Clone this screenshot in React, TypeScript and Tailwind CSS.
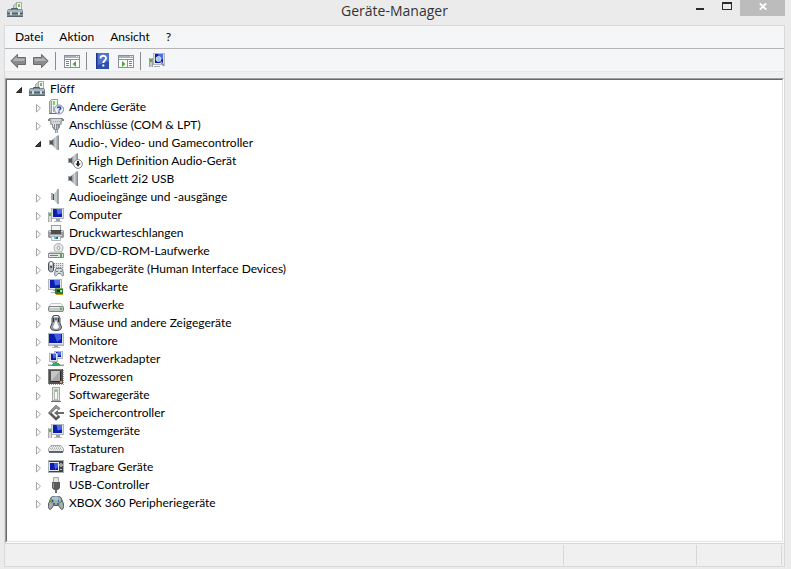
import React from 'react';

const Svg: React.FC<{ children: React.ReactNode }> = ({ children }) => (
  <svg width="16" height="16" viewBox="0 0 16 16" className="block shrink-0" aria-hidden="true">
    {children}
  </svg>
);

const DeviceManager = () => (
  <Svg>
    <path d="M6.5 7.5V3.5L8.5 1.5H9.5V7.5Z" fill="#c9cdd0" stroke="#a3a8ab" />
    <rect x="9.5" y=".5" width="5" height="8" fill="#f2f4f1" stroke="#a9aca8" />
    <rect x="11" y="2" width="2" height="3" fill="#6cc24a" />
    <path d="M1 7H15L16 9V15H0V9Z" fill="#7b8b95" />
    <path d="M1 8H15V10H1Z" fill="#a9b6be" />
    <path d="M4.5 8V6.5H10.5V8" fill="none" stroke="#4e5b64" />
    <path d="M0 11H16V12H0Z" fill="#53626c" />
    <path d="M3 10H5V13H3ZM11 10H13V13H11Z" fill="#d4dbdf" />
    <path d="M0 14H16V15H0Z" fill="#56646d" />
  </Svg>
);

const Unknown = () => (
  <Svg>
    <path d="M1.5 14V2.5L3.5 .5H9.5V14Z" fill="#c6cac7" stroke="#9b9e9c" />
    <rect x="4" y="1" width="5" height="13" fill="#f0f2ef" />
    <path d="M3.5 2V14" stroke="#9b9e9c" />
    <rect x="5" y="2" width="2" height="4" fill="#7ccf5c" />
    <path d="M5.5 7V13" stroke="#aeb2af" />
    <path d="M1 14.5H9" stroke="#6e716f" />
    <circle cx="11" cy="10.5" r="4.5" fill="#eef3fb" stroke="#8089a0" />
    <path d="M9.4 9.3C9.4 7.4 12.7 7.5 12.7 9.2C12.7 10.4 11 10.3 11 11.6" fill="none" stroke="#2246a8" strokeWidth="1.5" />
    <rect x="10.2" y="12.4" width="1.5" height="1.5" fill="#2246a8" />
  </Svg>
);

const Port = () => (
  <Svg>
    <path d="M1 1H15L13.5 8H2.5Z" fill="#a3a8ab" />
    <path d="M3 2H13L12 7H4Z" fill="#d3d7d9" />
    <path d="M1 1.5H15" stroke="#878d90" />
    <path d="M5 4.5H12" stroke="#9da2a5" strokeDasharray="1 1" />
    <path d="M0 2H2V4H0ZM14 2H16V4H14Z" fill="#7f8588" />
    <path d="M4 7H12V10L10 13H6L4 10Z" fill="#858b8e" />
    <path d="M5.5 7V10M7.5 7V12" stroke="#dfe2e3" />
    <path d="M9.5 8V12" stroke="#b3b8ba" />
    <rect x="7" y="13" width="3" height="3" fill="#989da0" />
    <path d="M8.5 13V16" stroke="#cdd1d3" />
  </Svg>
);

const SpeakerShape = () => (
  <>
    <defs>
      <linearGradient id="cone" x1="0" x2="1">
        <stop offset="0" stopColor="#6a7074" />
        <stop offset=".5" stopColor="#d0d4d6" />
        <stop offset="1" stopColor="#8f9498" />
      </linearGradient>
    </defs>
    <path d="M1 5H5V10H1Z" fill="#9da2a5" />
    <path d="M2 6H4V9H2Z" fill="#4f555a" />
    <path d="M4 5L9 .5H10.5V15H9L4 10Z" fill="url(#cone)" />
    <path d="M10.5 .5V15" stroke="#8a8f93" />
    <path d="M4.5 5V10" stroke="#555b60" />
  </>
);

const Speaker = () => (
  <Svg>
    <SpeakerShape />
  </Svg>
);

const SpeakerDisabled = () => (
  <Svg>
    <SpeakerShape />
    <circle cx="11" cy="11" r="4.4" fill="#f8f8f8" stroke="#86898b" />
    <path d="M11 8V11" stroke="#222" strokeWidth="2" />
    <path d="M8.4 10.5H13.6L11 13.7Z" fill="#222" />
  </Svg>
);

const AudioEndpoint = () => (
  <Svg>
    <path d="M3 4H5V11H3Z" fill="#a4a9ac" />
    <path d="M5 5H7V11H5Z" fill="#4b5156" />
    <path d="M6 5L9.5 .5V15L6 11Z" fill="#c3c8cb" />
    <path d="M10 0V15" stroke="#878c90" strokeWidth="1.5" />
  </Svg>
);

// blue screen shared by all icons that show a monitor
const Screen: React.FC<{ x: number; y: number; w: number; h: number }> = ({ x, y, w, h }) => (
  <>
    <rect x={x + 0.5} y={y + 0.5} width={w - 1} height={h - 1} fill="#e2e5e7" stroke="#b2b7bb" />
    <rect x={x + 2} y={y + 1} width={w - 4} height={h - 3} fill="#0b1cae" />
    <path d={`M${x + w / 2 - 1} ${y + 1}H${x + w - 2}V${y + h / 2}L${x + w / 2} ${y + h / 2 + 1}Z`} fill="#4d6ce6" />
  </>
);

const Computer = () => (
  <Svg>
    <Screen x={3} y={1} w={13} h={11} />
    <rect x="0" y="5" width="4" height="10" fill="#d9dcda" />
    <path d="M.5 5V15M3.5 5V15" stroke="#a8acaa" />
    <rect x="1" y="6" width="2" height="3" fill="#58bf3d" />
    <rect x="8" y="12" width="4" height="2" fill="#9aa0a4" />
    <path d="M6 14.5H14" stroke="#b4b9bc" />
  </Svg>
);

const Printer = () => (
  <Svg>
    <rect x="3.5" y=".5" width="9" height="6" fill="#f4f4f4" stroke="#9a9ea0" />
    <rect x="0" y="5" width="16" height="8" rx="1.5" fill="#989c9e" />
    <path d="M1 6.5H3M13 6.5H15" stroke="#dcdfe0" />
    <rect x="3" y="5" width="10" height="4" fill="#4b4f51" />
    <path d="M2 10.5H14" stroke="#cfd2d4" />
    <path d="M3.5 11.5H12.5V15.5H3.5Z" fill="#f6f9fb" stroke="#b0b4b6" />
    <path d="M6 12H8V14H6Z" fill="#51b8d0" />
    <path d="M8 12H10V14H8Z" fill="#2373a2" />
  </Svg>
);

const Disc = () => (
  <Svg>
    <circle cx="10.5" cy="5" r="4.5" fill="#eceeee" stroke="#a4a9ac" />
    <path d="M10.5 5L8.5 1.5H12ZM10.5 5L12 9H9Z" fill="#bfe0b8" />
    <circle cx="10.5" cy="5" r="1.5" fill="#fff" stroke="#999fa2" />
    <path d="M2 8.5H14L16 11V14.5H0V11Z" fill="#c6cacc" />
    <path d="M.5 10.5H15.5V14.5H.5Z" fill="#e4e6e7" stroke="#85898c" />
    <path d="M2 12.5H10" stroke="#73787b" />
    <rect x="12" y="11" width="2" height="3" fill="#45b52f" />
  </Svg>
);

const Hid = () => (
  <Svg>
    <path d="M.5 2.5C.5 0 5.5 0 5.5 2.5V9C5.5 11.5 1.5 11.5 .5 9Z" fill="#aeb3b7" stroke="#4e5357" />
    <path d="M3 1V4" stroke="#f3f4f5" strokeWidth="2" />
    <path d="M3 5V7" stroke="#373b3e" strokeWidth="1.5" />
    <rect x="6" y="2" width="10" height="5" fill="#e2e4e6" />
    <path d="M6 2.5H16M6 4.5H16M6 6.5H16" stroke="#8a8f92" strokeDasharray="1 1" />
    <path d="M7.5 8C9 7 13 7 14.5 8L15.5 13.5C15.5 15.5 14 15.5 12.5 12.5H10C8.5 15.5 7 15.5 6.5 13.5Z" fill="#d2dbe1" stroke="#6b7b87" />
    <path d="M8 10.5H10M12 10.5H14" stroke="#4d86c0" />
  </Svg>
);

const Graphics = () => (
  <Svg>
    <Screen x={0} y={0} w={14} h={11} />
    <path d="M5 11.5H7M3 13.5H7" stroke="#aab0b4" />
    <rect x="7" y="9" width="8" height="6" fill="#2c7a37" />
    <path d="M7 9.5H15" stroke="#6fae5c" />
    <rect x="9" y="11" width="3" height="2" fill="#16351b" />
    <rect x="12" y="11" width="2" height="2" fill="#b4dcae" />
    <path d="M8 15.5H15" stroke="#c99a25" />
  </Svg>
);

const Drive = () => (
  <Svg>
    <path d="M3 6.5H13L15.5 9.5H.5Z" fill="#f6f6f6" stroke="#c4c7c8" />
    <rect x=".5" y="9.5" width="15" height="5" rx="1.5" fill="#c6c9cb" stroke="#808486" />
    <path d="M2 10.5H11" stroke="#eceeee" />
    <rect x="12" y="11" width="2" height="2" fill="#3bc323" />
  </Svg>
);

const Mouse = () => (
  <Svg>
    <path d="M5.5 .5L4 3V8L2.5 12C2.5 15 5 15.5 8 15.5S13.5 15 13.5 12L12 8V3L10.5 .5Z" fill="#9aa1a6" stroke="#4a5055" />
    <path d="M6 1L8 5L10 1Z" fill="#f4f5f6" />
    <path d="M8 5L5 12C6 14.5 10 14.5 11 12Z" fill="#fafbfb" />
    <path d="M5.5 3V7M10.5 3V7" stroke="#282c30" />
    <path d="M8 2.5V5" stroke="#3a3f44" strokeWidth="1.5" />
  </Svg>
);

const Monitor = () => (
  <Svg>
    <rect x=".5" y=".5" width="15" height="12" fill="#dfe2e5" stroke="#b2b7bb" />
    <rect x="1" y="1" width="13" height="9" fill="#0b1cae" />
    <path d="M6 1H13V6L9 9Z" fill="#3f5ee0" />
    <path d="M1 11.5H15" stroke="#c2c7ca" />
    <rect x="6" y="12" width="4" height="2" fill="#9ba1a5" />
    <path d="M4 14.5H12" stroke="#b4b9bd" />
  </Svg>
);

const Network = () => (
  <Svg>
    <Screen x={6} y={0} w={9} h={8} />
    <Screen x={1} y={2} w={9} h={9} />
    <path d="M4 11.5H8" stroke="#9da2a6" />
    <path d="M7 11H9V13H7Z" fill="#2a9c5c" />
    <path d="M0 13.5H16" stroke="#cfd3d5" />
    <path d="M0 14.5H16" stroke="#9ba0a3" />
    <path d="M5 12H11V13H12V15H4V13H5Z" fill="#2cae66" />
  </Svg>
);

const Cpu = () => (
  <Svg>
    <path d="M1 15.5H16" stroke="#c79b38" strokeDasharray="1 1" />
    <path d="M15.5 1V16" stroke="#c79b38" strokeDasharray="1 1" />
    <rect x="0" y="0" width="15" height="15" fill="#525252" />
    <path d="M.5 15V.5H14" fill="none" stroke="#7b7b7b" />
    <rect x="3" y="2" width="9" height="10" fill="#a8a8a8" />
    <path d="M3 2H12L3 12Z" fill="#c6c6c6" />
    <path d="M12.5 2V12.5H3" fill="none" stroke="#2a2a2a" />
    <rect x="12" y="12" width="2" height="2" fill="#d8a83c" />
  </Svg>
);

const Software = () => (
  <Svg>
    <rect x="4.5" y=".5" width="7" height="13" fill="#e6e9e6" stroke="#a5a9a6" />
    <rect x="6.5" y="2.5" width="3" height="10" fill="#f8f9f8" stroke="#b4b8b5" />
    <rect x="7" y="2" width="2" height="3" fill="#8bcf77" />
    <path d="M3 14.5H13" stroke="#6c706d" />
  </Svg>
);

const Storage = () => (
  <Svg>
    <path d="M11.5 4.2L8 1.5L1.8 8L8 14L11.5 11" fill="none" stroke="#595959" strokeWidth="2.6" />
    <path d="M11.5 4.2L8 1.5L1.8 8" fill="none" stroke="#939393" strokeWidth="2.2" />
    <path d="M6 8L10 5V7H16V9H10V11Z" fill="#6b6b6b" />
  </Svg>
);

const Keyboard = () => (
  <Svg>
    <path d="M3 4.5H13L15.5 8V10.5H.5V8Z" fill="#f1f2f2" stroke="#a3a7a9" />
    <path d="M3 5.5H13M2 7.5H14" stroke="#a9adaf" strokeDasharray="1 1" />
    <path d="M3 6.5H13M2 8.5H14" stroke="#c4c7c9" strokeDasharray="1 1" strokeDashoffset="1" />
    <path d="M1 11H15" stroke="#5d6575" strokeWidth="2" />
    <path d="M1 9.5H15" stroke="#dfe1e2" />
  </Svg>
);

const Portable = () => (
  <Svg>
    <rect x=".5" y="1.5" width="15" height="12" fill="#3e4247" stroke="#aab0b5" />
    <rect x="1" y="3" width="10" height="9" fill="#e8eaec" />
    <rect x="2" y="4" width="8" height="7" fill="#0b1cae" />
    <path d="M6 4H10V8L7 11Z" fill="#3f64e8" />
    <circle cx="13" cy="6" r="1.3" fill="none" stroke="#e4e6e8" />
    <rect x="12" y="10" width="2" height="1" fill="#c5c9cc" />
  </Svg>
);

const Usb = () => (
  <Svg>
    <rect x="5.5" y=".5" width="5" height="5" fill="#e3e5e6" stroke="#a9acae" />
    <path d="M4 5H12V11L10 13H6L4 11Z" fill="#5a5c5e" />
    <path d="M5.5 6V11" stroke="#929597" />
    <path d="M7 13H9V16H7Z" fill="#6a6c6e" />
  </Svg>
);

const Xbox = () => (
  <Svg>
    <path d="M3 2.5C5 .8 6.5 2 8 2S11 .8 13 2.5L15.5 9C16 14 14 15.5 13 14L10.5 10.5H5.5L3 14C2 15.5 0 14 .5 9Z" fill="#a6adb3" stroke="#555c63" />
    <path d="M4 3.5C5 2.5 6 3 8 3" fill="none" stroke="#e0e4e7" />
    <circle cx="4" cy="6" r="1.5" fill="#4b5258" />
    <rect x="6" y="2" width="4" height="3" fill="#8fd0e6" />
    <circle cx="6" cy="9" r="1.3" fill="#62696f" />
    <circle cx="10" cy="9" r="1.3" fill="#62696f" />
    <rect x="2" y="5" width="2" height="2" fill="#46b93c" />
    <rect x="11" y="4" width="2" height="1" fill="#e8b422" />
    <rect x="10" y="5" width="1" height="2" fill="#2f64d6" />
    <rect x="13" y="5" width="1" height="2" fill="#d23d2c" />
    <rect x="11" y="7" width="2" height="1" fill="#37a93a" />
  </Svg>
);

const Back = () => (
  <Svg>
    <path d="M.8 8L7.5 1.3V4.5H15.5V11.5H7.5V14.7Z" fill="#8b8b8b" stroke="#6a6a6a" />
    <path d="M2.5 8L6.5 4V5.5H14.5V8Z" fill="#b3b3b3" />
  </Svg>
);

const Forward = () => (
  <Svg>
    <path d="M15.2 8L8.5 1.3V4.5H.5V11.5H8.5V14.7Z" fill="#8b8b8b" stroke="#6a6a6a" />
    <path d="M13.5 8L9.5 4V5.5H1.5V8Z" fill="#b3b3b3" />
  </Svg>
);

const ConsoleTree = () => (
  <Svg>
    <rect x=".5" y="2.5" width="15" height="12" fill="#fff" stroke="#8a919a" />
    <rect x="1" y="3" width="14" height="2" fill="#a8b0b9" />
    <path d="M12 3.5H15" stroke="#f4f5f7" strokeDasharray="1 1" />
    <path d="M0 6.5H16" stroke="#8a919a" />
    <path d="M6.5 7V14" stroke="#8a919a" />
    <path d="M2 8.5H5M2 10.5H5M2 12.5H5" stroke="#4a8ad4" />
    <path d="M12 8V14L8.5 11Z" fill="#3fb02b" />
  </Svg>
);

const ActionPane = () => (
  <Svg>
    <rect x=".5" y="2.5" width="15" height="12" fill="#fff" stroke="#8a919a" />
    <rect x="1" y="3" width="14" height="2" fill="#a8b0b9" />
    <path d="M12 3.5H15" stroke="#f4f5f7" strokeDasharray="1 1" />
    <path d="M0 6.5H16" stroke="#8a919a" />
    <path d="M9.5 7V14" stroke="#8a919a" />
    <path d="M11 8.5H14M11 10.5H14M11 12.5H14" stroke="#4a8ad4" />
    <path d="M4 8V14L7.5 11Z" fill="#3fb02b" />
  </Svg>
);

const Help = () => (
  <Svg>
    <rect x="1" y="0" width="13" height="16" fill="#2e4fae" />
    <path d="M3 0H14V8L3 12Z" fill="#5273cf" />
    <path d="M1.5 0V16" stroke="#1d3789" />
    <path d="M5.5 5.5C5.5 1.8 11 2 11 5.2C11 7.5 8.3 7.5 8.3 10" fill="none" stroke="#fff" strokeWidth="1.8" />
    <rect x="7.3" y="11.5" width="2" height="2" fill="#fff" />
  </Svg>
);

const Scan = () => (
  <Svg>
    <Screen x={4} y={0} w={12} h={12} />
    <rect x="0" y="5" width="4" height="9" fill="#c5c9c6" />
    <path d="M.5 5V14M3.5 5V14" stroke="#989d9a" />
    <rect x="1" y="6" width="2" height="3" fill="#4eb536" />
    <circle cx="9.5" cy="6" r="2.4" fill="#9cccf5" stroke="#dfe8f2" />
    <path d="M11.5 8.5L15 13" stroke="#9297a0" strokeWidth="2" />
    <path d="M5 13.5H11" stroke="#a5aab0" />
  </Svg>
);

type Node = {
  label: string;
  icon: React.FC;
  children?: Node[];
};

const categories: Node[] = [
  { label: 'Andere Geräte', icon: Unknown },
  { label: 'Anschlüsse (COM & LPT)', icon: Port },
  {
    label: 'Audio-, Video- und Gamecontroller',
    icon: Speaker,
    children: [
      { label: 'High Definition Audio-Gerät', icon: SpeakerDisabled },
      { label: 'Scarlett 2i2 USB', icon: Speaker },
    ],
  },
  { label: 'Audioeingänge und -ausgänge', icon: AudioEndpoint },
  { label: 'Computer', icon: Computer },
  { label: 'Druckwarteschlangen', icon: Printer },
  { label: 'DVD/CD-ROM-Laufwerke', icon: Disc },
  { label: 'Eingabegeräte (Human Interface Devices)', icon: Hid },
  { label: 'Grafikkarte', icon: Graphics },
  { label: 'Laufwerke', icon: Drive },
  { label: 'Mäuse und andere Zeigegeräte', icon: Mouse },
  { label: 'Monitore', icon: Monitor },
  { label: 'Netzwerkadapter', icon: Network },
  { label: 'Prozessoren', icon: Cpu },
  { label: 'Softwaregeräte', icon: Software },
  { label: 'Speichercontroller', icon: Storage },
  { label: 'Systemgeräte', icon: Computer },
  { label: 'Tastaturen', icon: Keyboard },
  { label: 'Tragbare Geräte', icon: Portable },
  { label: 'USB-Controller', icon: Usb },
  { label: 'XBOX 360 Peripheriegeräte', icon: Xbox },
];

const TreeItem: React.FC<{ node: Node; leaf?: boolean }> = ({ node, leaf }) => {
  const Icon = node.icon;
  return (
    <li role="treeitem">
      <div className="flex h-[18px] items-center">
        {leaf ? (
          <span className="w-4" />
        ) : (
          <button type="button" aria-label={node.label + ' umschalten'} className="block size-4">
            <Svg>
              {node.children ? (
                <path d="M10.5 6.5V11.5H5.5Z" fill="#404040" stroke="#262626" />
              ) : (
                <path d="M6.5 5.5V13L10.5 9.2Z" fill="#fff" stroke="#a6a6a6" />
              )}
            </Svg>
          </button>
        )}
        <span className="ml-0.5">
          <Icon />
        </span>
        <span className="ml-1 whitespace-nowrap px-px">{node.label}</span>
      </div>
      {node.children && (
        <ul role="group" className="pl-[19px]">
          {node.children.map((child) => (
            <TreeItem key={child.label} node={child} leaf={!child.children && node.label !== 'Flöff'} />
          ))}
        </ul>
      )}
    </li>
  );
};

const ToolButton: React.FC<{ label: string; children: React.ReactNode }> = ({ label, children }) => (
  <button type="button" aria-label={label} className="block size-4">
    {children}
  </button>
);

const Divider = () => <span className="h-[18px] w-px bg-[#8c8c8c]" />;

export default function App() {
  return (
    <div className="flex h-screen flex-col bg-[#ebebeb] pr-1.5 pb-0.5 pl-1 font-['Lato',sans-serif] text-xs text-black [font-variant-ligatures:none]">
      <header className="flex h-[25px] shrink-0 items-start">
        <div className="w-[97px] pt-0.5 pl-[3px]">
          <DeviceManager />
        </div>
        <h1 className="flex-1 text-center font-['Open_Sans',sans-serif] text-sm leading-[22px] text-[#333]">Geräte-Manager</h1>
        <div className="flex w-[97px]">
          <button type="button" aria-label="Minimieren" className="flex h-4 w-[26px] items-start pt-2 pl-2">
            <span className="h-0.5 w-2 bg-[#2b2b2b]" />
          </button>
          <button type="button" aria-label="Maximieren" className="flex h-4 w-[26px] items-start pt-0.5 pl-2">
            <span className="h-2 w-2.5 border border-t-2 border-[#2b2b2b]" />
          </button>
          <button type="button" aria-label="Schließen" className="flex h-4 w-[45px] items-start justify-center bg-[#bcbcbc] pt-[3px]">
            <svg width="8" height="7" viewBox="0 0 8 7" aria-hidden="true">
              <path d="M.8 .3L7.2 6.7M7.2 .3L.8 6.7" stroke="#fff" strokeWidth="1.8" />
            </svg>
          </button>
        </div>
      </header>

      <main className="flex min-h-0 flex-1 flex-col border border-[#d9d9d9] bg-[#f0f0f0]">
        <nav className="flex h-[23px] shrink-0 items-center gap-4 border-b border-[#b4b4b4] bg-[#f5f6f7] px-2.5">
          <button type="button">Datei</button>
          <button type="button">Aktion</button>
          <button type="button">Ansicht</button>
          <button type="button">?</button>
        </nav>

        <div className="flex h-[23px] shrink-0 items-center border-b border-[#e8e8e8] bg-[#f5f6f7] pt-0.5 pl-[5px]">
          <div className="flex items-center gap-[7px] pr-1.5">
            <ToolButton label="Zurück"><Back /></ToolButton>
            <ToolButton label="Vorwärts"><Forward /></ToolButton>
          </div>
          <Divider />
          <div className="flex pr-1.5 pl-2">
            <ToolButton label="Konsolenstruktur"><ConsoleTree /></ToolButton>
          </div>
          <Divider />
          <div className="flex gap-[7px] pr-1.5 pl-2">
            <ToolButton label="Hilfe"><Help /></ToolButton>
            <ToolButton label="Aktionsbereich"><ActionPane /></ToolButton>
          </div>
          <Divider />
          <div className="flex pl-2">
            <ToolButton label="Nach geänderter Hardware suchen"><Scan /></ToolButton>
          </div>
        </div>

        <div className="mt-1.5 flex min-h-0 flex-1 border-t border-r border-b border-l border-t-[#a0a0a0] border-r-white border-b-white border-l-[#a0a0a0]">
          <div className="min-w-0 flex-1 overflow-hidden border border-t-[#696969] border-r-[#e3e3e3] border-b-[#e3e3e3] border-l-[#696969] bg-white pl-1">
            <ul role="tree">
              <TreeItem node={{ label: 'Flöff', icon: DeviceManager, children: categories }} />
            </ul>
          </div>
        </div>

        <footer className="flex h-[23px] shrink-0 border-t border-[#d7d7d7] py-px pr-0.5">
          <span className="flex-1 border-r border-[#d7d7d7]" />
          <span className="w-[133px] border-r border-[#d7d7d7]" />
          <span className="w-[85px] border-r border-[#d7d7d7]" />
        </footer>
      </main>
    </div>
  );
}
